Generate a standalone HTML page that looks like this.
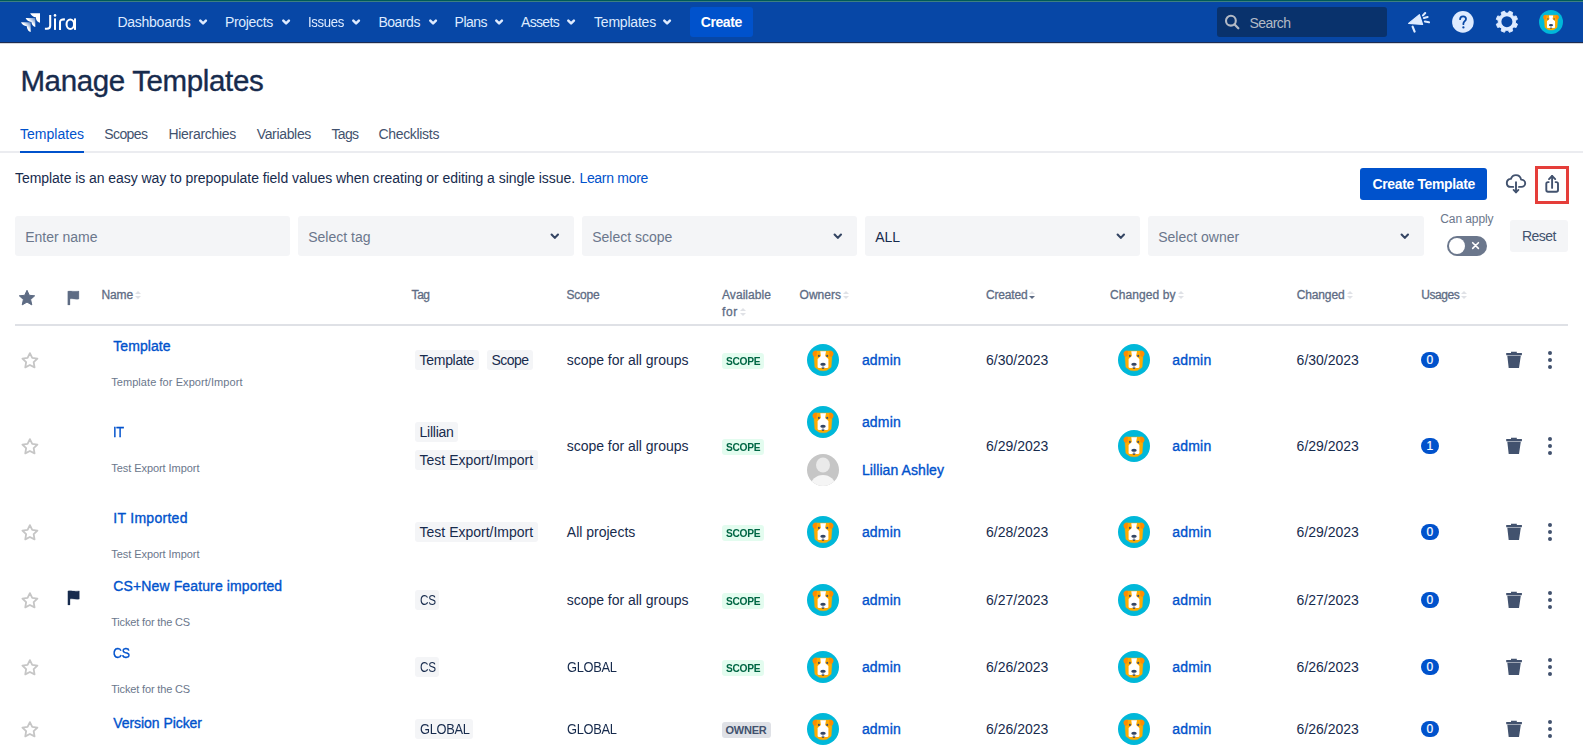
<!DOCTYPE html>
<html><head><meta charset="utf-8"><title>Manage Templates</title>
<style>
html,body{margin:0;padding:0;background:#FFFFFF;}
body{width:1583px;height:754px;position:relative;overflow:hidden;font-family:"Liberation Sans",sans-serif;}
</style></head><body>
<div style="position:absolute;left:0px;top:0px;width:1583px;height:1px;background:#005A5A;border-radius:0px;"></div>
<div style="position:absolute;left:0px;top:1px;width:1583px;height:1px;background:#3E8080;border-radius:0px;"></div>
<div style="position:absolute;left:0px;top:2px;width:1583px;height:40px;background:#0747A6;border-radius:0px;"></div>
<div style="position:absolute;left:0px;top:42px;width:1583px;height:1px;background:#1E2C50;border-radius:0px;"></div>
<div style="position:absolute;left:0px;top:43px;width:1583px;height:1px;background:#D5D7DC;border-radius:0px;"></div>
<svg style="position:absolute;left:0px;top:0px;overflow:visible" width="90" height="44" viewBox="0 0 90 44">
<defs>
<linearGradient id="jg" x1="0.95" y1="0.05" x2="0.55" y2="0.45"><stop offset="0" stop-color="#FFFFFF" stop-opacity="0.35"/><stop offset="1" stop-color="#FFFFFF"/></linearGradient>
</defs>
<path fill="#FFFFFF" d="M30.1 13.2H40V22.7C38.4 22.3 36.3 20.9 36.1 19L35.9 17.2C33.4 17 31.2 15.6 30.1 13.2Z"/>
<path fill="url(#jg)" d="M25.6 18H35.3V27C33.6 26.6 31.7 25 31.4 21.9C28.7 21.8 26.5 20.3 25.6 18Z"/>
<path fill="url(#jg)" d="M21 22.3H30.7V32C29 31.5 27.1 30 26.8 26.2C24.1 26 21.9 24.6 21 22.3Z"/>
<g fill="none" stroke="#FFFFFF" stroke-width="2.05">
<path d="M50.2 14.9V25.8C50.2 28.1 49 28.7 47 28.7H44.9"/>
<path d="M55 18.4V29.9"/>
<path d="M60 29.9V22.3C60 20 61.8 19.3 64.9 19.4"/>
<ellipse cx="70.3" cy="24.15" rx="3.75" ry="4.75"/>
<path d="M75 18.4V29.9"/>
</g>
<circle cx="55" cy="15.4" r="1.3" fill="#FFFFFF"/>
</svg>
<svg style="position:absolute;left:199px;top:18px;overflow:visible" width="10" height="8" viewBox="0 0 10 8"><path d="M1.3 2.6L4.1 5.4L6.9 2.6" fill="none" stroke="#DEEBFF" stroke-width="2.5" stroke-linecap="round" stroke-linejoin="round"/></svg>
<svg style="position:absolute;left:282px;top:18px;overflow:visible" width="10" height="8" viewBox="0 0 10 8"><path d="M1.3 2.6L4.1 5.4L6.9 2.6" fill="none" stroke="#DEEBFF" stroke-width="2.5" stroke-linecap="round" stroke-linejoin="round"/></svg>
<svg style="position:absolute;left:352px;top:18px;overflow:visible" width="10" height="8" viewBox="0 0 10 8"><path d="M1.3 2.6L4.1 5.4L6.9 2.6" fill="none" stroke="#DEEBFF" stroke-width="2.5" stroke-linecap="round" stroke-linejoin="round"/></svg>
<svg style="position:absolute;left:429px;top:18px;overflow:visible" width="10" height="8" viewBox="0 0 10 8"><path d="M1.3 2.6L4.1 5.4L6.9 2.6" fill="none" stroke="#DEEBFF" stroke-width="2.5" stroke-linecap="round" stroke-linejoin="round"/></svg>
<svg style="position:absolute;left:495px;top:18px;overflow:visible" width="10" height="8" viewBox="0 0 10 8"><path d="M1.3 2.6L4.1 5.4L6.9 2.6" fill="none" stroke="#DEEBFF" stroke-width="2.5" stroke-linecap="round" stroke-linejoin="round"/></svg>
<svg style="position:absolute;left:567px;top:18px;overflow:visible" width="10" height="8" viewBox="0 0 10 8"><path d="M1.3 2.6L4.1 5.4L6.9 2.6" fill="none" stroke="#DEEBFF" stroke-width="2.5" stroke-linecap="round" stroke-linejoin="round"/></svg>
<svg style="position:absolute;left:663px;top:18px;overflow:visible" width="10" height="8" viewBox="0 0 10 8"><path d="M1.3 2.6L4.1 5.4L6.9 2.6" fill="none" stroke="#DEEBFF" stroke-width="2.5" stroke-linecap="round" stroke-linejoin="round"/></svg>
<div style="position:absolute;left:690px;top:7px;width:63px;height:29.799999999999997px;background:#0052CC;border-radius:3px;"></div>
<div style="position:absolute;left:1217px;top:7px;width:170px;height:29.5px;background:#09326C;border-radius:3px;"></div>
<svg style="position:absolute;left:1222px;top:13px;overflow:visible" width="20" height="20" viewBox="0 0 20 20"><circle cx="8.9" cy="7.7" r="4.9" fill="none" stroke="#B3BAC5" stroke-width="2.1"/><path d="M12.4 11.3L16.3 15.2" stroke="#B3BAC5" stroke-width="2.3" stroke-linecap="round"/></svg>
<svg style="position:absolute;left:1404px;top:8px;overflow:visible" width="30" height="28" viewBox="0 0 30 28"><g fill="#DEEBFF" stroke="#DEEBFF" stroke-linejoin="round">
<path d="M4.6 15.4L15.4 6.7L18.6 16.5Z" stroke-width="1.2"/>
<path d="M8.6 18.7L10.6 23.6" stroke-width="2.2" stroke-linecap="round"/>
<path d="M21.2 5.0L19.0 7.4" stroke-width="2.1" stroke-linecap="round"/>
<path d="M19.9 10.0L23.6 9.1" stroke-width="2.1" stroke-linecap="round"/>
<path d="M20.9 13.5L25.0 14.3" stroke-width="2.1" stroke-linecap="round"/>
</g></svg>
<svg style="position:absolute;left:1452px;top:11px;overflow:visible" width="22" height="22" viewBox="0 0 22 22"><circle cx="10.9" cy="10.9" r="10.8" fill="#DEEBFF"/>
<path d="M8.1 8.2C8.1 6.5 9.4 5.3 11.1 5.3C12.8 5.3 14 6.4 14 8C14 10 11.4 10.4 11.4 12.6V13.2" fill="none" stroke="#0747A6" stroke-width="1.8" stroke-linecap="round"/>
<circle cx="11.4" cy="16.4" r="1.15" fill="#0747A6"/></svg>
<svg style="position:absolute;left:1490px;top:6px;overflow:visible" width="34" height="32" viewBox="0 0 34 32"><polygon points="18.11,7.08 19.35,5.08 22.68,6.46 22.14,8.75 23.85,10.46 26.14,9.92 27.52,13.25 25.52,14.49 25.52,16.91 27.52,18.15 26.14,21.48 23.85,20.94 22.14,22.65 22.68,24.94 19.35,26.32 18.11,24.32 15.69,24.32 14.45,26.32 11.12,24.94 11.66,22.65 9.95,20.94 7.66,21.48 6.28,18.15 8.28,16.91 8.28,14.49 6.28,13.25 7.66,9.92 9.95,10.46 11.66,8.75 11.12,6.46 14.45,5.08 15.69,7.08" fill="#DEEBFF" stroke="#DEEBFF" stroke-width="0.9" stroke-linejoin="round"/><circle cx="16.9" cy="15.7" r="5.5" fill="#0747A6"/></svg>
<svg style="position:absolute;left:1539px;top:10px;overflow:visible" width="24" height="24" viewBox="0 0 32 32"><circle cx="16" cy="16" r="16" fill="#00B8D9"/>
<path d="M7.6 6.9H24.4L24.9 14L24.1 23.3L19.8 26.3C18 26.9 14 26.9 12.2 26.3L7.9 23.3L7.1 14Z" fill="#FFAB00" stroke="#FFAB00" stroke-width="0.4" stroke-linejoin="round"/>
<path d="M9.9 6.9C7.6 6.3 5.5 7.4 5.5 9.7C5.5 11.2 6.4 12.4 7.7 12.8L9.5 12.3Z" fill="#FF8B00"/>
<path d="M22.1 6.9C24.4 6.3 26.5 7.4 26.5 9.7C26.5 11.2 25.6 12.4 24.3 12.8L22.5 12.3Z" fill="#FF8B00"/>
<path d="M13.3 7.3H19L18.1 11.9L21.4 15V23.3L20.3 24.1H11.7L10.6 23.3V15L13.9 11.9Z" fill="#FFFFFF"/>
<circle cx="11.9" cy="11.9" r="1.05" fill="#42526E"/>
<circle cx="20.2" cy="11.9" r="1.05" fill="#42526E"/>
<ellipse cx="16" cy="20.2" rx="2.75" ry="1.55" fill="#344563"/>
<path d="M16 21.5V23.6" stroke="#42526E" stroke-width="0.7"/>
<path d="M14.4 23.6H17.6C17.3 24.5 16.7 24.9 16 24.9C15.3 24.9 14.7 24.5 14.4 23.6Z" fill="#344563"/>
</svg>
<div style="position:absolute;left:0px;top:151px;width:1583px;height:2px;background:#EBECF0;border-radius:0px;"></div>
<div style="position:absolute;left:20px;top:151px;width:64px;height:2px;background:#0052CC;border-radius:0px;"></div>
<div style="position:absolute;left:1360px;top:168px;width:127px;height:32px;background:#0052CC;border-radius:3px;"></div>
<svg style="position:absolute;left:1500px;top:165px;overflow:visible" width="32" height="32" viewBox="0 0 32 32"><g fill="none" stroke="#42526E" stroke-width="1.9" stroke-linecap="round" stroke-linejoin="round">
<path d="M13.2 21.9H10.9C8.1 21.9 6.8 20 6.8 17.9C6.8 15.6 8.6 13.8 10.9 13.9C11.8 11.4 13.8 10.1 15.9 10.1C18.5 10.1 20.6 12 21.1 14.6C23.3 14.6 25.2 16.2 25.2 18.3C25.2 20.4 23.5 21.9 21.4 21.9H19"/>
<path d="M16 17.3V27.3"/>
<path d="M13.6 24.9L16 27.3L18.4 24.9"/>
</g></svg>
<div style="position:absolute;left:1535px;top:166px;width:28px;height:32px;border:3px solid #E53E3A;"></div>
<svg style="position:absolute;left:1535px;top:165px;overflow:visible" width="34" height="40" viewBox="0 0 34 40"><g fill="none" stroke="#42526E" stroke-width="1.9" stroke-linecap="round" stroke-linejoin="round">
<path d="M13.7 17.1H13C11.9 17.1 11.3 17.7 11.3 18.8V25C11.3 26.1 11.9 26.7 13 26.7H21.3C22.4 26.7 23 26.1 23 25V18.8C23 17.7 22.4 17.1 21.3 17.1H20.6"/>
<path d="M17.1 22.9V11"/>
<path d="M14 14.1L17.1 11L20.2 14.1"/>
</g></svg>
<div style="position:absolute;left:15px;top:216px;width:275px;height:39.5px;background:#F4F5F7;border-radius:3px;"></div>
<div style="position:absolute;left:298px;top:216px;width:276px;height:39.5px;background:#F4F5F7;border-radius:3px;"></div>
<svg style="position:absolute;left:550px;top:232px;overflow:visible" width="10" height="10" viewBox="0 0 10 10"><path d="M1.6 2.5L4.8 5.9L8 2.5" fill="none" stroke="#344563" stroke-width="2.1" stroke-linecap="round" stroke-linejoin="round"/></svg>
<div style="position:absolute;left:582px;top:216px;width:275px;height:39.5px;background:#F4F5F7;border-radius:3px;"></div>
<svg style="position:absolute;left:833px;top:232px;overflow:visible" width="10" height="10" viewBox="0 0 10 10"><path d="M1.6 2.5L4.8 5.9L8 2.5" fill="none" stroke="#344563" stroke-width="2.1" stroke-linecap="round" stroke-linejoin="round"/></svg>
<div style="position:absolute;left:865px;top:216px;width:275px;height:39.5px;background:#F4F5F7;border-radius:3px;"></div>
<svg style="position:absolute;left:1116px;top:232px;overflow:visible" width="10" height="10" viewBox="0 0 10 10"><path d="M1.6 2.5L4.8 5.9L8 2.5" fill="none" stroke="#344563" stroke-width="2.1" stroke-linecap="round" stroke-linejoin="round"/></svg>
<div style="position:absolute;left:1148px;top:216px;width:276px;height:39.5px;background:#F4F5F7;border-radius:3px;"></div>
<svg style="position:absolute;left:1400px;top:232px;overflow:visible" width="10" height="10" viewBox="0 0 10 10"><path d="M1.6 2.5L4.8 5.9L8 2.5" fill="none" stroke="#344563" stroke-width="2.1" stroke-linecap="round" stroke-linejoin="round"/></svg>
<div style="position:absolute;left:1447px;top:236px;width:40px;height:20px;background:#6B778C;border-radius:10px;"></div>
<div style="position:absolute;left:1449px;top:238px;width:16px;height:16px;border-radius:8px;background:#FFFFFF"></div>
<svg style="position:absolute;left:1470px;top:240px;overflow:visible" width="12" height="12" viewBox="0 0 12 12"><path d="M2.7 2.7L8.4 8.4M8.4 2.7L2.7 8.4" stroke="#FFFFFF" stroke-width="1.6" stroke-linecap="round"/></svg>
<div style="position:absolute;left:1510px;top:220px;width:58px;height:32px;background:#F4F5F7;border-radius:3px;"></div>
<svg style="position:absolute;left:17px;top:288px;overflow:visible" width="20" height="20" viewBox="0 0 20 20"><path d="M10 2.3L12.3 7.3L17.7 7.8L13.6 11.5L14.8 16.9L10 14.1L5.2 16.9L6.4 11.5L2.3 7.8L7.7 7.3Z" fill="#5E6C84" stroke="#5E6C84" stroke-width="1" stroke-linejoin="round"/></svg>
<svg style="position:absolute;left:65px;top:288px;overflow:visible" width="18" height="20" viewBox="0 0 18 20"><path d="M2.8 3.3C5.5 2.4 8.5 3.9 13.9 3.1V11C10.5 11.9 7.8 10.2 5 10.9V16.9H2.8Z" fill="#5E6C84" stroke="#5E6C84" stroke-width="0.3" stroke-linejoin="round"/></svg>
<svg style="position:absolute;left:135.0px;top:289px;overflow:visible" width="6" height="12" viewBox="0 0 6 12"><path d="M0 5L3 2L6 5Z" fill="#DFE1E6"/><path d="M0 7L3 10L6 7Z" fill="#DFE1E6"/></svg>
<svg style="position:absolute;left:842.9px;top:289px;overflow:visible" width="6" height="12" viewBox="0 0 6 12"><path d="M0 5L3 2L6 5Z" fill="#DFE1E6"/><path d="M0 7L3 10L6 7Z" fill="#DFE1E6"/></svg>
<svg style="position:absolute;left:1029.4px;top:289px;overflow:visible" width="6" height="12" viewBox="0 0 6 12"><path d="M0 5L3 2L6 5Z" fill="#DFE1E6"/><path d="M0 7L3 10L6 7Z" fill="#5E6C84"/></svg>
<svg style="position:absolute;left:1177.6px;top:289px;overflow:visible" width="6" height="12" viewBox="0 0 6 12"><path d="M0 5L3 2L6 5Z" fill="#DFE1E6"/><path d="M0 7L3 10L6 7Z" fill="#DFE1E6"/></svg>
<svg style="position:absolute;left:1346.5px;top:289px;overflow:visible" width="6" height="12" viewBox="0 0 6 12"><path d="M0 5L3 2L6 5Z" fill="#DFE1E6"/><path d="M0 7L3 10L6 7Z" fill="#DFE1E6"/></svg>
<svg style="position:absolute;left:1461.2px;top:289px;overflow:visible" width="6" height="12" viewBox="0 0 6 12"><path d="M0 5L3 2L6 5Z" fill="#DFE1E6"/><path d="M0 7L3 10L6 7Z" fill="#DFE1E6"/></svg>
<svg style="position:absolute;left:740px;top:306px;overflow:visible" width="6" height="12" viewBox="0 0 6 12"><path d="M0 5L3 2L6 5Z" fill="#DFE1E6"/><path d="M0 7L3 10L6 7Z" fill="#DFE1E6"/></svg>
<div style="position:absolute;left:15px;top:324px;width:1553px;height:2px;background:#DFE1E6;border-radius:0px;"></div>
<svg style="position:absolute;left:20px;top:350px;overflow:visible" width="20" height="20" viewBox="0 0 20 20"><path d="M9.90 3.10L12.22 7.80L17.41 8.56L13.66 12.22L14.54 17.39L9.90 14.95L5.26 17.39L6.14 12.22L2.39 8.56L7.58 7.80Z" fill="none" stroke="#C6C6C6" stroke-width="1.8" stroke-linejoin="round"/></svg>
<div style="position:absolute;left:415.2px;top:350.0px;width:63.39999999999998px;height:20.0px;background:#F4F5F7;border-radius:3px;"></div>
<div style="position:absolute;left:487.2px;top:350.0px;width:45.50000000000006px;height:20.0px;background:#F4F5F7;border-radius:3px;"></div>
<div style="position:absolute;left:722px;top:353px;width:42px;height:16px;background:#E3FCEF;border-radius:3px;"></div>
<svg style="position:absolute;left:807px;top:344.0px;overflow:visible" width="32" height="32" viewBox="0 0 32 32"><circle cx="16" cy="16" r="16" fill="#00B8D9"/>
<path d="M7.6 6.9H24.4L24.9 14L24.1 23.3L19.8 26.3C18 26.9 14 26.9 12.2 26.3L7.9 23.3L7.1 14Z" fill="#FFAB00" stroke="#FFAB00" stroke-width="0.4" stroke-linejoin="round"/>
<path d="M9.9 6.9C7.6 6.3 5.5 7.4 5.5 9.7C5.5 11.2 6.4 12.4 7.7 12.8L9.5 12.3Z" fill="#FF8B00"/>
<path d="M22.1 6.9C24.4 6.3 26.5 7.4 26.5 9.7C26.5 11.2 25.6 12.4 24.3 12.8L22.5 12.3Z" fill="#FF8B00"/>
<path d="M13.3 7.3H19L18.1 11.9L21.4 15V23.3L20.3 24.1H11.7L10.6 23.3V15L13.9 11.9Z" fill="#FFFFFF"/>
<circle cx="11.9" cy="11.9" r="1.05" fill="#42526E"/>
<circle cx="20.2" cy="11.9" r="1.05" fill="#42526E"/>
<ellipse cx="16" cy="20.2" rx="2.75" ry="1.55" fill="#344563"/>
<path d="M16 21.5V23.6" stroke="#42526E" stroke-width="0.7"/>
<path d="M14.4 23.6H17.6C17.3 24.5 16.7 24.9 16 24.9C15.3 24.9 14.7 24.5 14.4 23.6Z" fill="#344563"/>
</svg>
<svg style="position:absolute;left:1118px;top:344px;overflow:visible" width="32" height="32" viewBox="0 0 32 32"><circle cx="16" cy="16" r="16" fill="#00B8D9"/>
<path d="M7.6 6.9H24.4L24.9 14L24.1 23.3L19.8 26.3C18 26.9 14 26.9 12.2 26.3L7.9 23.3L7.1 14Z" fill="#FFAB00" stroke="#FFAB00" stroke-width="0.4" stroke-linejoin="round"/>
<path d="M9.9 6.9C7.6 6.3 5.5 7.4 5.5 9.7C5.5 11.2 6.4 12.4 7.7 12.8L9.5 12.3Z" fill="#FF8B00"/>
<path d="M22.1 6.9C24.4 6.3 26.5 7.4 26.5 9.7C26.5 11.2 25.6 12.4 24.3 12.8L22.5 12.3Z" fill="#FF8B00"/>
<path d="M13.3 7.3H19L18.1 11.9L21.4 15V23.3L20.3 24.1H11.7L10.6 23.3V15L13.9 11.9Z" fill="#FFFFFF"/>
<circle cx="11.9" cy="11.9" r="1.05" fill="#42526E"/>
<circle cx="20.2" cy="11.9" r="1.05" fill="#42526E"/>
<ellipse cx="16" cy="20.2" rx="2.75" ry="1.55" fill="#344563"/>
<path d="M16 21.5V23.6" stroke="#42526E" stroke-width="0.7"/>
<path d="M14.4 23.6H17.6C17.3 24.5 16.7 24.9 16 24.9C15.3 24.9 14.7 24.5 14.4 23.6Z" fill="#344563"/>
</svg>
<div style="position:absolute;left:1421px;top:352px;width:18px;height:16px;background:#0052CC;border-radius:8px;"></div>
<svg style="position:absolute;left:1506px;top:352px;overflow:visible" width="16" height="16" viewBox="0 0 16 16"><path d="M0.2 0.9H15.9V3.2H0.2Z M5 -0.2H10.8V1H5Z M1.3 3.8H14.8L13 16H2.7Z" fill="#42526E"/></svg>
<div style="position:absolute;left:1548px;top:351px;width:4px;height:4px;border-radius:2px;background:#42526E"></div>
<div style="position:absolute;left:1548px;top:358px;width:4px;height:4px;border-radius:2px;background:#42526E"></div>
<div style="position:absolute;left:1548px;top:365px;width:4px;height:4px;border-radius:2px;background:#42526E"></div>
<svg style="position:absolute;left:20px;top:436px;overflow:visible" width="20" height="20" viewBox="0 0 20 20"><path d="M9.90 3.10L12.22 7.80L17.41 8.56L13.66 12.22L14.54 17.39L9.90 14.95L5.26 17.39L6.14 12.22L2.39 8.56L7.58 7.80Z" fill="none" stroke="#C6C6C6" stroke-width="1.8" stroke-linejoin="round"/></svg>
<div style="position:absolute;left:415.2px;top:422.0px;width:42.60000000000002px;height:20.0px;background:#F4F5F7;border-radius:3px;"></div>
<div style="position:absolute;left:415.2px;top:450.0px;width:122.59999999999997px;height:20.0px;background:#F4F5F7;border-radius:3px;"></div>
<div style="position:absolute;left:722px;top:439px;width:42px;height:16px;background:#E3FCEF;border-radius:3px;"></div>
<svg style="position:absolute;left:807px;top:406.0px;overflow:visible" width="32" height="32" viewBox="0 0 32 32"><circle cx="16" cy="16" r="16" fill="#00B8D9"/>
<path d="M7.6 6.9H24.4L24.9 14L24.1 23.3L19.8 26.3C18 26.9 14 26.9 12.2 26.3L7.9 23.3L7.1 14Z" fill="#FFAB00" stroke="#FFAB00" stroke-width="0.4" stroke-linejoin="round"/>
<path d="M9.9 6.9C7.6 6.3 5.5 7.4 5.5 9.7C5.5 11.2 6.4 12.4 7.7 12.8L9.5 12.3Z" fill="#FF8B00"/>
<path d="M22.1 6.9C24.4 6.3 26.5 7.4 26.5 9.7C26.5 11.2 25.6 12.4 24.3 12.8L22.5 12.3Z" fill="#FF8B00"/>
<path d="M13.3 7.3H19L18.1 11.9L21.4 15V23.3L20.3 24.1H11.7L10.6 23.3V15L13.9 11.9Z" fill="#FFFFFF"/>
<circle cx="11.9" cy="11.9" r="1.05" fill="#42526E"/>
<circle cx="20.2" cy="11.9" r="1.05" fill="#42526E"/>
<ellipse cx="16" cy="20.2" rx="2.75" ry="1.55" fill="#344563"/>
<path d="M16 21.5V23.6" stroke="#42526E" stroke-width="0.7"/>
<path d="M14.4 23.6H17.6C17.3 24.5 16.7 24.9 16 24.9C15.3 24.9 14.7 24.5 14.4 23.6Z" fill="#344563"/>
</svg>
<svg style="position:absolute;left:807px;top:454.0px;overflow:visible" width="32" height="32" viewBox="0 0 32 32"><defs><clipPath id="gc"><circle cx="16" cy="16" r="16"/></clipPath></defs><circle cx="16" cy="16" r="16" fill="#C6C6C6"/>
<filter id="gb"><feGaussianBlur stdDeviation="0.5"/></filter><g clip-path="url(#gc)"><g filter="url(#gb)"><ellipse cx="16" cy="11" rx="7" ry="7.6" fill="#EAEAEA"/><ellipse cx="16" cy="32.5" rx="12.5" ry="11.5" fill="#F5F5F5"/></g></g></svg>
<svg style="position:absolute;left:1118px;top:430px;overflow:visible" width="32" height="32" viewBox="0 0 32 32"><circle cx="16" cy="16" r="16" fill="#00B8D9"/>
<path d="M7.6 6.9H24.4L24.9 14L24.1 23.3L19.8 26.3C18 26.9 14 26.9 12.2 26.3L7.9 23.3L7.1 14Z" fill="#FFAB00" stroke="#FFAB00" stroke-width="0.4" stroke-linejoin="round"/>
<path d="M9.9 6.9C7.6 6.3 5.5 7.4 5.5 9.7C5.5 11.2 6.4 12.4 7.7 12.8L9.5 12.3Z" fill="#FF8B00"/>
<path d="M22.1 6.9C24.4 6.3 26.5 7.4 26.5 9.7C26.5 11.2 25.6 12.4 24.3 12.8L22.5 12.3Z" fill="#FF8B00"/>
<path d="M13.3 7.3H19L18.1 11.9L21.4 15V23.3L20.3 24.1H11.7L10.6 23.3V15L13.9 11.9Z" fill="#FFFFFF"/>
<circle cx="11.9" cy="11.9" r="1.05" fill="#42526E"/>
<circle cx="20.2" cy="11.9" r="1.05" fill="#42526E"/>
<ellipse cx="16" cy="20.2" rx="2.75" ry="1.55" fill="#344563"/>
<path d="M16 21.5V23.6" stroke="#42526E" stroke-width="0.7"/>
<path d="M14.4 23.6H17.6C17.3 24.5 16.7 24.9 16 24.9C15.3 24.9 14.7 24.5 14.4 23.6Z" fill="#344563"/>
</svg>
<div style="position:absolute;left:1421px;top:438px;width:18px;height:16px;background:#0052CC;border-radius:8px;"></div>
<svg style="position:absolute;left:1506px;top:438px;overflow:visible" width="16" height="16" viewBox="0 0 16 16"><path d="M0.2 0.9H15.9V3.2H0.2Z M5 -0.2H10.8V1H5Z M1.3 3.8H14.8L13 16H2.7Z" fill="#42526E"/></svg>
<div style="position:absolute;left:1548px;top:437px;width:4px;height:4px;border-radius:2px;background:#42526E"></div>
<div style="position:absolute;left:1548px;top:444px;width:4px;height:4px;border-radius:2px;background:#42526E"></div>
<div style="position:absolute;left:1548px;top:451px;width:4px;height:4px;border-radius:2px;background:#42526E"></div>
<svg style="position:absolute;left:20px;top:522px;overflow:visible" width="20" height="20" viewBox="0 0 20 20"><path d="M9.90 3.10L12.22 7.80L17.41 8.56L13.66 12.22L14.54 17.39L9.90 14.95L5.26 17.39L6.14 12.22L2.39 8.56L7.58 7.80Z" fill="none" stroke="#C6C6C6" stroke-width="1.8" stroke-linejoin="round"/></svg>
<div style="position:absolute;left:415.2px;top:522.0px;width:122.59999999999997px;height:20.0px;background:#F4F5F7;border-radius:3px;"></div>
<div style="position:absolute;left:722px;top:525px;width:42px;height:16px;background:#E3FCEF;border-radius:3px;"></div>
<svg style="position:absolute;left:807px;top:516.0px;overflow:visible" width="32" height="32" viewBox="0 0 32 32"><circle cx="16" cy="16" r="16" fill="#00B8D9"/>
<path d="M7.6 6.9H24.4L24.9 14L24.1 23.3L19.8 26.3C18 26.9 14 26.9 12.2 26.3L7.9 23.3L7.1 14Z" fill="#FFAB00" stroke="#FFAB00" stroke-width="0.4" stroke-linejoin="round"/>
<path d="M9.9 6.9C7.6 6.3 5.5 7.4 5.5 9.7C5.5 11.2 6.4 12.4 7.7 12.8L9.5 12.3Z" fill="#FF8B00"/>
<path d="M22.1 6.9C24.4 6.3 26.5 7.4 26.5 9.7C26.5 11.2 25.6 12.4 24.3 12.8L22.5 12.3Z" fill="#FF8B00"/>
<path d="M13.3 7.3H19L18.1 11.9L21.4 15V23.3L20.3 24.1H11.7L10.6 23.3V15L13.9 11.9Z" fill="#FFFFFF"/>
<circle cx="11.9" cy="11.9" r="1.05" fill="#42526E"/>
<circle cx="20.2" cy="11.9" r="1.05" fill="#42526E"/>
<ellipse cx="16" cy="20.2" rx="2.75" ry="1.55" fill="#344563"/>
<path d="M16 21.5V23.6" stroke="#42526E" stroke-width="0.7"/>
<path d="M14.4 23.6H17.6C17.3 24.5 16.7 24.9 16 24.9C15.3 24.9 14.7 24.5 14.4 23.6Z" fill="#344563"/>
</svg>
<svg style="position:absolute;left:1118px;top:516px;overflow:visible" width="32" height="32" viewBox="0 0 32 32"><circle cx="16" cy="16" r="16" fill="#00B8D9"/>
<path d="M7.6 6.9H24.4L24.9 14L24.1 23.3L19.8 26.3C18 26.9 14 26.9 12.2 26.3L7.9 23.3L7.1 14Z" fill="#FFAB00" stroke="#FFAB00" stroke-width="0.4" stroke-linejoin="round"/>
<path d="M9.9 6.9C7.6 6.3 5.5 7.4 5.5 9.7C5.5 11.2 6.4 12.4 7.7 12.8L9.5 12.3Z" fill="#FF8B00"/>
<path d="M22.1 6.9C24.4 6.3 26.5 7.4 26.5 9.7C26.5 11.2 25.6 12.4 24.3 12.8L22.5 12.3Z" fill="#FF8B00"/>
<path d="M13.3 7.3H19L18.1 11.9L21.4 15V23.3L20.3 24.1H11.7L10.6 23.3V15L13.9 11.9Z" fill="#FFFFFF"/>
<circle cx="11.9" cy="11.9" r="1.05" fill="#42526E"/>
<circle cx="20.2" cy="11.9" r="1.05" fill="#42526E"/>
<ellipse cx="16" cy="20.2" rx="2.75" ry="1.55" fill="#344563"/>
<path d="M16 21.5V23.6" stroke="#42526E" stroke-width="0.7"/>
<path d="M14.4 23.6H17.6C17.3 24.5 16.7 24.9 16 24.9C15.3 24.9 14.7 24.5 14.4 23.6Z" fill="#344563"/>
</svg>
<div style="position:absolute;left:1421px;top:524px;width:18px;height:16px;background:#0052CC;border-radius:8px;"></div>
<svg style="position:absolute;left:1506px;top:524px;overflow:visible" width="16" height="16" viewBox="0 0 16 16"><path d="M0.2 0.9H15.9V3.2H0.2Z M5 -0.2H10.8V1H5Z M1.3 3.8H14.8L13 16H2.7Z" fill="#42526E"/></svg>
<div style="position:absolute;left:1548px;top:523px;width:4px;height:4px;border-radius:2px;background:#42526E"></div>
<div style="position:absolute;left:1548px;top:530px;width:4px;height:4px;border-radius:2px;background:#42526E"></div>
<div style="position:absolute;left:1548px;top:537px;width:4px;height:4px;border-radius:2px;background:#42526E"></div>
<svg style="position:absolute;left:20px;top:590px;overflow:visible" width="20" height="20" viewBox="0 0 20 20"><path d="M9.90 3.10L12.22 7.80L17.41 8.56L13.66 12.22L14.54 17.39L9.90 14.95L5.26 17.39L6.14 12.22L2.39 8.56L7.58 7.80Z" fill="none" stroke="#C6C6C6" stroke-width="1.8" stroke-linejoin="round"/></svg>
<svg style="position:absolute;left:65px;top:590px;overflow:visible" width="18" height="20" viewBox="0 0 18 20"><path d="M2.9 1.1C5.7 0.3 8.8 1.7 14.3 0.9V9.1C10.8 9.9 8 8.3 5 9V14.9H2.9Z" fill="#172B4D" stroke="#172B4D" stroke-width="0.3" stroke-linejoin="round"/></svg>
<div style="position:absolute;left:415.2px;top:590.0px;width:23.5px;height:20.0px;background:#F4F5F7;border-radius:3px;"></div>
<div style="position:absolute;left:722px;top:593px;width:42px;height:16px;background:#E3FCEF;border-radius:3px;"></div>
<svg style="position:absolute;left:807px;top:584.0px;overflow:visible" width="32" height="32" viewBox="0 0 32 32"><circle cx="16" cy="16" r="16" fill="#00B8D9"/>
<path d="M7.6 6.9H24.4L24.9 14L24.1 23.3L19.8 26.3C18 26.9 14 26.9 12.2 26.3L7.9 23.3L7.1 14Z" fill="#FFAB00" stroke="#FFAB00" stroke-width="0.4" stroke-linejoin="round"/>
<path d="M9.9 6.9C7.6 6.3 5.5 7.4 5.5 9.7C5.5 11.2 6.4 12.4 7.7 12.8L9.5 12.3Z" fill="#FF8B00"/>
<path d="M22.1 6.9C24.4 6.3 26.5 7.4 26.5 9.7C26.5 11.2 25.6 12.4 24.3 12.8L22.5 12.3Z" fill="#FF8B00"/>
<path d="M13.3 7.3H19L18.1 11.9L21.4 15V23.3L20.3 24.1H11.7L10.6 23.3V15L13.9 11.9Z" fill="#FFFFFF"/>
<circle cx="11.9" cy="11.9" r="1.05" fill="#42526E"/>
<circle cx="20.2" cy="11.9" r="1.05" fill="#42526E"/>
<ellipse cx="16" cy="20.2" rx="2.75" ry="1.55" fill="#344563"/>
<path d="M16 21.5V23.6" stroke="#42526E" stroke-width="0.7"/>
<path d="M14.4 23.6H17.6C17.3 24.5 16.7 24.9 16 24.9C15.3 24.9 14.7 24.5 14.4 23.6Z" fill="#344563"/>
</svg>
<svg style="position:absolute;left:1118px;top:584px;overflow:visible" width="32" height="32" viewBox="0 0 32 32"><circle cx="16" cy="16" r="16" fill="#00B8D9"/>
<path d="M7.6 6.9H24.4L24.9 14L24.1 23.3L19.8 26.3C18 26.9 14 26.9 12.2 26.3L7.9 23.3L7.1 14Z" fill="#FFAB00" stroke="#FFAB00" stroke-width="0.4" stroke-linejoin="round"/>
<path d="M9.9 6.9C7.6 6.3 5.5 7.4 5.5 9.7C5.5 11.2 6.4 12.4 7.7 12.8L9.5 12.3Z" fill="#FF8B00"/>
<path d="M22.1 6.9C24.4 6.3 26.5 7.4 26.5 9.7C26.5 11.2 25.6 12.4 24.3 12.8L22.5 12.3Z" fill="#FF8B00"/>
<path d="M13.3 7.3H19L18.1 11.9L21.4 15V23.3L20.3 24.1H11.7L10.6 23.3V15L13.9 11.9Z" fill="#FFFFFF"/>
<circle cx="11.9" cy="11.9" r="1.05" fill="#42526E"/>
<circle cx="20.2" cy="11.9" r="1.05" fill="#42526E"/>
<ellipse cx="16" cy="20.2" rx="2.75" ry="1.55" fill="#344563"/>
<path d="M16 21.5V23.6" stroke="#42526E" stroke-width="0.7"/>
<path d="M14.4 23.6H17.6C17.3 24.5 16.7 24.9 16 24.9C15.3 24.9 14.7 24.5 14.4 23.6Z" fill="#344563"/>
</svg>
<div style="position:absolute;left:1421px;top:592px;width:18px;height:16px;background:#0052CC;border-radius:8px;"></div>
<svg style="position:absolute;left:1506px;top:592px;overflow:visible" width="16" height="16" viewBox="0 0 16 16"><path d="M0.2 0.9H15.9V3.2H0.2Z M5 -0.2H10.8V1H5Z M1.3 3.8H14.8L13 16H2.7Z" fill="#42526E"/></svg>
<div style="position:absolute;left:1548px;top:591px;width:4px;height:4px;border-radius:2px;background:#42526E"></div>
<div style="position:absolute;left:1548px;top:598px;width:4px;height:4px;border-radius:2px;background:#42526E"></div>
<div style="position:absolute;left:1548px;top:605px;width:4px;height:4px;border-radius:2px;background:#42526E"></div>
<svg style="position:absolute;left:20px;top:657px;overflow:visible" width="20" height="20" viewBox="0 0 20 20"><path d="M9.90 3.10L12.22 7.80L17.41 8.56L13.66 12.22L14.54 17.39L9.90 14.95L5.26 17.39L6.14 12.22L2.39 8.56L7.58 7.80Z" fill="none" stroke="#C6C6C6" stroke-width="1.8" stroke-linejoin="round"/></svg>
<div style="position:absolute;left:415.2px;top:657.0px;width:23.5px;height:20.0px;background:#F4F5F7;border-radius:3px;"></div>
<div style="position:absolute;left:722px;top:660px;width:42px;height:16px;background:#E3FCEF;border-radius:3px;"></div>
<svg style="position:absolute;left:807px;top:651.0px;overflow:visible" width="32" height="32" viewBox="0 0 32 32"><circle cx="16" cy="16" r="16" fill="#00B8D9"/>
<path d="M7.6 6.9H24.4L24.9 14L24.1 23.3L19.8 26.3C18 26.9 14 26.9 12.2 26.3L7.9 23.3L7.1 14Z" fill="#FFAB00" stroke="#FFAB00" stroke-width="0.4" stroke-linejoin="round"/>
<path d="M9.9 6.9C7.6 6.3 5.5 7.4 5.5 9.7C5.5 11.2 6.4 12.4 7.7 12.8L9.5 12.3Z" fill="#FF8B00"/>
<path d="M22.1 6.9C24.4 6.3 26.5 7.4 26.5 9.7C26.5 11.2 25.6 12.4 24.3 12.8L22.5 12.3Z" fill="#FF8B00"/>
<path d="M13.3 7.3H19L18.1 11.9L21.4 15V23.3L20.3 24.1H11.7L10.6 23.3V15L13.9 11.9Z" fill="#FFFFFF"/>
<circle cx="11.9" cy="11.9" r="1.05" fill="#42526E"/>
<circle cx="20.2" cy="11.9" r="1.05" fill="#42526E"/>
<ellipse cx="16" cy="20.2" rx="2.75" ry="1.55" fill="#344563"/>
<path d="M16 21.5V23.6" stroke="#42526E" stroke-width="0.7"/>
<path d="M14.4 23.6H17.6C17.3 24.5 16.7 24.9 16 24.9C15.3 24.9 14.7 24.5 14.4 23.6Z" fill="#344563"/>
</svg>
<svg style="position:absolute;left:1118px;top:651px;overflow:visible" width="32" height="32" viewBox="0 0 32 32"><circle cx="16" cy="16" r="16" fill="#00B8D9"/>
<path d="M7.6 6.9H24.4L24.9 14L24.1 23.3L19.8 26.3C18 26.9 14 26.9 12.2 26.3L7.9 23.3L7.1 14Z" fill="#FFAB00" stroke="#FFAB00" stroke-width="0.4" stroke-linejoin="round"/>
<path d="M9.9 6.9C7.6 6.3 5.5 7.4 5.5 9.7C5.5 11.2 6.4 12.4 7.7 12.8L9.5 12.3Z" fill="#FF8B00"/>
<path d="M22.1 6.9C24.4 6.3 26.5 7.4 26.5 9.7C26.5 11.2 25.6 12.4 24.3 12.8L22.5 12.3Z" fill="#FF8B00"/>
<path d="M13.3 7.3H19L18.1 11.9L21.4 15V23.3L20.3 24.1H11.7L10.6 23.3V15L13.9 11.9Z" fill="#FFFFFF"/>
<circle cx="11.9" cy="11.9" r="1.05" fill="#42526E"/>
<circle cx="20.2" cy="11.9" r="1.05" fill="#42526E"/>
<ellipse cx="16" cy="20.2" rx="2.75" ry="1.55" fill="#344563"/>
<path d="M16 21.5V23.6" stroke="#42526E" stroke-width="0.7"/>
<path d="M14.4 23.6H17.6C17.3 24.5 16.7 24.9 16 24.9C15.3 24.9 14.7 24.5 14.4 23.6Z" fill="#344563"/>
</svg>
<div style="position:absolute;left:1421px;top:659px;width:18px;height:16px;background:#0052CC;border-radius:8px;"></div>
<svg style="position:absolute;left:1506px;top:659px;overflow:visible" width="16" height="16" viewBox="0 0 16 16"><path d="M0.2 0.9H15.9V3.2H0.2Z M5 -0.2H10.8V1H5Z M1.3 3.8H14.8L13 16H2.7Z" fill="#42526E"/></svg>
<div style="position:absolute;left:1548px;top:658px;width:4px;height:4px;border-radius:2px;background:#42526E"></div>
<div style="position:absolute;left:1548px;top:665px;width:4px;height:4px;border-radius:2px;background:#42526E"></div>
<div style="position:absolute;left:1548px;top:672px;width:4px;height:4px;border-radius:2px;background:#42526E"></div>
<svg style="position:absolute;left:20px;top:719px;overflow:visible" width="20" height="20" viewBox="0 0 20 20"><path d="M9.90 3.10L12.22 7.80L17.41 8.56L13.66 12.22L14.54 17.39L9.90 14.95L5.26 17.39L6.14 12.22L2.39 8.56L7.58 7.80Z" fill="none" stroke="#C6C6C6" stroke-width="1.8" stroke-linejoin="round"/></svg>
<div style="position:absolute;left:415.2px;top:719.0px;width:57.60000000000002px;height:20.0px;background:#F4F5F7;border-radius:3px;"></div>
<div style="position:absolute;left:722px;top:722px;width:48.5px;height:16px;background:#DFE1E6;border-radius:3px;"></div>
<svg style="position:absolute;left:807px;top:713.0px;overflow:visible" width="32" height="32" viewBox="0 0 32 32"><circle cx="16" cy="16" r="16" fill="#00B8D9"/>
<path d="M7.6 6.9H24.4L24.9 14L24.1 23.3L19.8 26.3C18 26.9 14 26.9 12.2 26.3L7.9 23.3L7.1 14Z" fill="#FFAB00" stroke="#FFAB00" stroke-width="0.4" stroke-linejoin="round"/>
<path d="M9.9 6.9C7.6 6.3 5.5 7.4 5.5 9.7C5.5 11.2 6.4 12.4 7.7 12.8L9.5 12.3Z" fill="#FF8B00"/>
<path d="M22.1 6.9C24.4 6.3 26.5 7.4 26.5 9.7C26.5 11.2 25.6 12.4 24.3 12.8L22.5 12.3Z" fill="#FF8B00"/>
<path d="M13.3 7.3H19L18.1 11.9L21.4 15V23.3L20.3 24.1H11.7L10.6 23.3V15L13.9 11.9Z" fill="#FFFFFF"/>
<circle cx="11.9" cy="11.9" r="1.05" fill="#42526E"/>
<circle cx="20.2" cy="11.9" r="1.05" fill="#42526E"/>
<ellipse cx="16" cy="20.2" rx="2.75" ry="1.55" fill="#344563"/>
<path d="M16 21.5V23.6" stroke="#42526E" stroke-width="0.7"/>
<path d="M14.4 23.6H17.6C17.3 24.5 16.7 24.9 16 24.9C15.3 24.9 14.7 24.5 14.4 23.6Z" fill="#344563"/>
</svg>
<svg style="position:absolute;left:1118px;top:713px;overflow:visible" width="32" height="32" viewBox="0 0 32 32"><circle cx="16" cy="16" r="16" fill="#00B8D9"/>
<path d="M7.6 6.9H24.4L24.9 14L24.1 23.3L19.8 26.3C18 26.9 14 26.9 12.2 26.3L7.9 23.3L7.1 14Z" fill="#FFAB00" stroke="#FFAB00" stroke-width="0.4" stroke-linejoin="round"/>
<path d="M9.9 6.9C7.6 6.3 5.5 7.4 5.5 9.7C5.5 11.2 6.4 12.4 7.7 12.8L9.5 12.3Z" fill="#FF8B00"/>
<path d="M22.1 6.9C24.4 6.3 26.5 7.4 26.5 9.7C26.5 11.2 25.6 12.4 24.3 12.8L22.5 12.3Z" fill="#FF8B00"/>
<path d="M13.3 7.3H19L18.1 11.9L21.4 15V23.3L20.3 24.1H11.7L10.6 23.3V15L13.9 11.9Z" fill="#FFFFFF"/>
<circle cx="11.9" cy="11.9" r="1.05" fill="#42526E"/>
<circle cx="20.2" cy="11.9" r="1.05" fill="#42526E"/>
<ellipse cx="16" cy="20.2" rx="2.75" ry="1.55" fill="#344563"/>
<path d="M16 21.5V23.6" stroke="#42526E" stroke-width="0.7"/>
<path d="M14.4 23.6H17.6C17.3 24.5 16.7 24.9 16 24.9C15.3 24.9 14.7 24.5 14.4 23.6Z" fill="#344563"/>
</svg>
<div style="position:absolute;left:1421px;top:721px;width:18px;height:16px;background:#0052CC;border-radius:8px;"></div>
<svg style="position:absolute;left:1506px;top:721px;overflow:visible" width="16" height="16" viewBox="0 0 16 16"><path d="M0.2 0.9H15.9V3.2H0.2Z M5 -0.2H10.8V1H5Z M1.3 3.8H14.8L13 16H2.7Z" fill="#42526E"/></svg>
<div style="position:absolute;left:1548px;top:720px;width:4px;height:4px;border-radius:2px;background:#42526E"></div>
<div style="position:absolute;left:1548px;top:727px;width:4px;height:4px;border-radius:2px;background:#42526E"></div>
<div style="position:absolute;left:1548px;top:734px;width:4px;height:4px;border-radius:2px;background:#42526E"></div>
<div style="position:absolute;left:117.4px;top:15.15px;font-size:14px;line-height:14px;font-weight:400;color:#DEEBFF;white-space:pre;letter-spacing:-0.250px;">Dashboards</div>
<div style="position:absolute;left:225px;top:15.15px;font-size:14px;line-height:14px;font-weight:400;color:#DEEBFF;white-space:pre;letter-spacing:-0.322px;">Projects</div>
<div style="position:absolute;left:307.7px;top:15.15px;font-size:14px;line-height:14px;font-weight:400;color:#DEEBFF;white-space:pre;letter-spacing:-0.35px;transform:scaleX(0.9415);transform-origin:0 0;">Issues</div>
<div style="position:absolute;left:378.4px;top:15.15px;font-size:14px;line-height:14px;font-weight:400;color:#DEEBFF;white-space:pre;letter-spacing:-0.460px;">Boards</div>
<div style="position:absolute;left:454.6px;top:15.15px;font-size:14px;line-height:14px;font-weight:400;color:#DEEBFF;white-space:pre;letter-spacing:-0.546px;">Plans</div>
<div style="position:absolute;left:521px;top:15.15px;font-size:14px;line-height:14px;font-weight:400;color:#DEEBFF;white-space:pre;letter-spacing:-0.669px;">Assets</div>
<div style="position:absolute;left:594px;top:15.15px;font-size:14px;line-height:14px;font-weight:400;color:#DEEBFF;white-space:pre;letter-spacing:-0.201px;">Templates</div>
<div style="position:absolute;left:700.8px;top:15.15px;font-size:14px;line-height:14px;font-weight:700;color:#FFFFFF;white-space:pre;letter-spacing:-0.432px;">Create</div>
<div style="position:absolute;left:1249.5px;top:16.05px;font-size:14px;line-height:14px;font-weight:400;color:#B3BAC5;white-space:pre;letter-spacing:-0.560px;">Search</div>
<div style="position:absolute;left:20.4px;top:66.03px;font-size:29.5px;line-height:29.5px;font-weight:400;color:#172B4D;white-space:pre;letter-spacing:-0.358px;-webkit-text-stroke:0.35px #172B4D;">Manage Templates</div>
<div style="position:absolute;left:20px;top:127.15px;font-size:14px;line-height:14px;font-weight:400;color:#0052CC;white-space:pre;letter-spacing:0.021px;">Templates</div>
<div style="position:absolute;left:104.3px;top:127.15px;font-size:14px;line-height:14px;font-weight:400;color:#42526E;white-space:pre;letter-spacing:-0.617px;">Scopes</div>
<div style="position:absolute;left:168.5px;top:127.15px;font-size:14px;line-height:14px;font-weight:400;color:#42526E;white-space:pre;letter-spacing:-0.301px;">Hierarchies</div>
<div style="position:absolute;left:256.7px;top:127.15px;font-size:14px;line-height:14px;font-weight:400;color:#42526E;white-space:pre;letter-spacing:-0.336px;">Variables</div>
<div style="position:absolute;left:331.5px;top:127.15px;font-size:14px;line-height:14px;font-weight:400;color:#42526E;white-space:pre;letter-spacing:-0.670px;">Tags</div>
<div style="position:absolute;left:378.4px;top:127.15px;font-size:14px;line-height:14px;font-weight:400;color:#42526E;white-space:pre;letter-spacing:-0.310px;">Checklists</div>
<div style="position:absolute;left:15px;top:171.35px;font-size:14px;line-height:14px;font-weight:400;color:#172B4D;white-space:pre;letter-spacing:-0.054px;">Template is an easy way to prepopulate field values when creating or editing a single issue.</div>
<div style="position:absolute;left:579.4px;top:171.35px;font-size:14px;line-height:14px;font-weight:400;color:#0052CC;white-space:pre;letter-spacing:-0.299px;">Learn more</div>
<div style="position:absolute;left:1372.5px;top:177.15px;font-size:14px;line-height:14px;font-weight:700;color:#FFFFFF;white-space:pre;letter-spacing:-0.360px;">Create Template</div>
<div style="position:absolute;left:25.2px;top:229.55px;font-size:14px;line-height:14px;font-weight:400;color:#6B778C;white-space:pre;">Enter name</div>
<div style="position:absolute;left:308.2px;top:229.55px;font-size:14px;line-height:14px;font-weight:400;color:#6B778C;white-space:pre;">Select tag</div>
<div style="position:absolute;left:592.2px;top:229.55px;font-size:14px;line-height:14px;font-weight:400;color:#6B778C;white-space:pre;">Select scope</div>
<div style="position:absolute;left:875.2px;top:229.55px;font-size:14px;line-height:14px;font-weight:400;color:#172B4D;white-space:pre;">ALL</div>
<div style="position:absolute;left:1158.2px;top:229.55px;font-size:14px;line-height:14px;font-weight:400;color:#6B778C;white-space:pre;">Select owner</div>
<div style="position:absolute;left:1440.3px;top:212.84px;font-size:12px;line-height:12px;font-weight:400;color:#6B778C;white-space:pre;letter-spacing:-0.094px;">Can apply</div>
<div style="position:absolute;left:1522px;top:229.15px;font-size:14px;line-height:14px;font-weight:400;color:#42526E;white-space:pre;letter-spacing:-0.516px;">Reset</div>
<div style="position:absolute;left:101.4px;top:288.84px;font-size:12px;line-height:12px;font-weight:400;color:#5E6C84;white-space:pre;letter-spacing:-0.104px;-webkit-text-stroke:0.3px #5E6C84;">Name</div>
<div style="position:absolute;left:411.6px;top:288.84px;font-size:12px;line-height:12px;font-weight:400;color:#5E6C84;white-space:pre;letter-spacing:-0.453px;-webkit-text-stroke:0.3px #5E6C84;">Tag</div>
<div style="position:absolute;left:566.5px;top:288.84px;font-size:12px;line-height:12px;font-weight:400;color:#5E6C84;white-space:pre;letter-spacing:-0.226px;-webkit-text-stroke:0.3px #5E6C84;">Scope</div>
<div style="position:absolute;left:722px;top:288.84px;font-size:12px;line-height:12px;font-weight:400;color:#5E6C84;white-space:pre;letter-spacing:0.057px;-webkit-text-stroke:0.3px #5E6C84;">Available</div>
<div style="position:absolute;left:799.6px;top:288.84px;font-size:12px;line-height:12px;font-weight:400;color:#5E6C84;white-space:pre;letter-spacing:-0.007px;-webkit-text-stroke:0.3px #5E6C84;">Owners</div>
<div style="position:absolute;left:986.1px;top:288.84px;font-size:12px;line-height:12px;font-weight:400;color:#5E6C84;white-space:pre;letter-spacing:-0.200px;-webkit-text-stroke:0.3px #5E6C84;">Created</div>
<div style="position:absolute;left:1110px;top:288.84px;font-size:12px;line-height:12px;font-weight:400;color:#5E6C84;white-space:pre;letter-spacing:0.088px;-webkit-text-stroke:0.3px #5E6C84;">Changed by</div>
<div style="position:absolute;left:1296.7px;top:288.84px;font-size:12px;line-height:12px;font-weight:400;color:#5E6C84;white-space:pre;letter-spacing:-0.131px;-webkit-text-stroke:0.3px #5E6C84;">Changed</div>
<div style="position:absolute;left:1421.3px;top:288.84px;font-size:12px;line-height:12px;font-weight:400;color:#5E6C84;white-space:pre;letter-spacing:-0.465px;-webkit-text-stroke:0.3px #5E6C84;">Usages</div>
<div style="position:absolute;left:722px;top:305.84px;font-size:12px;line-height:12px;font-weight:400;color:#5E6C84;white-space:pre;letter-spacing:0.661px;-webkit-text-stroke:0.3px #5E6C84;">for</div>
<div style="position:absolute;left:113.3px;top:339.15px;font-size:14px;line-height:14px;font-weight:400;color:#0052CC;white-space:pre;letter-spacing:0.061px;-webkit-text-stroke:0.35px #0052CC;">Template</div>
<div style="position:absolute;left:111.2px;top:376.69px;font-size:11px;line-height:11px;font-weight:400;color:#6B778C;white-space:pre;letter-spacing:0.069px;">Template for Export/Import</div>
<div style="position:absolute;left:419.59999999999997px;top:352.55px;font-size:14px;line-height:14px;font-weight:400;color:#172B4D;white-space:pre;letter-spacing:-0.302px;">Template</div>
<div style="position:absolute;left:491.59999999999997px;top:352.55px;font-size:14px;line-height:14px;font-weight:400;color:#172B4D;white-space:pre;letter-spacing:-0.561px;">Scope</div>
<div style="position:absolute;left:566.8px;top:353.15px;font-size:14px;line-height:14px;font-weight:400;color:#172B4D;white-space:pre;letter-spacing:-0.029px;">scope for all groups</div>
<div style="position:absolute;left:725.8px;top:355.69px;font-size:11px;line-height:11px;font-weight:700;color:#006644;white-space:pre;letter-spacing:-0.35px;transform:scaleX(0.9282);transform-origin:0 0;">SCOPE</div>
<div style="position:absolute;left:861.9px;top:353.15px;font-size:14px;line-height:14px;font-weight:400;color:#0052CC;white-space:pre;letter-spacing:0.192px;-webkit-text-stroke:0.35px #0052CC;">admin</div>
<div style="position:absolute;left:986px;top:353.15px;font-size:14px;line-height:14px;font-weight:400;color:#172B4D;white-space:pre;">6/30/2023</div>
<div style="position:absolute;left:1172.3px;top:353.15px;font-size:14px;line-height:14px;font-weight:400;color:#0052CC;white-space:pre;letter-spacing:0.192px;-webkit-text-stroke:0.35px #0052CC;">admin</div>
<div style="position:absolute;left:1296.6px;top:353.15px;font-size:14px;line-height:14px;font-weight:400;color:#172B4D;white-space:pre;">6/30/2023</div>
<div style="position:absolute;left:1426.6px;top:354.34px;font-size:12px;line-height:12px;font-weight:400;color:#FFFFFF;white-space:pre;-webkit-text-stroke:0.2px #FFFFFF;">0</div>
<div style="position:absolute;left:113.3px;top:425.15px;font-size:14px;line-height:14px;font-weight:400;color:#0052CC;white-space:pre;letter-spacing:-0.35px;transform:scaleX(0.9154);transform-origin:0 0;-webkit-text-stroke:0.35px #0052CC;">IT</div>
<div style="position:absolute;left:111.2px;top:462.69px;font-size:11px;line-height:11px;font-weight:400;color:#6B778C;white-space:pre;letter-spacing:-0.054px;">Test Export Import</div>
<div style="position:absolute;left:419.59999999999997px;top:424.55px;font-size:14px;line-height:14px;font-weight:400;color:#172B4D;white-space:pre;letter-spacing:-0.259px;">Lillian</div>
<div style="position:absolute;left:419.59999999999997px;top:452.55px;font-size:14px;line-height:14px;font-weight:400;color:#172B4D;white-space:pre;letter-spacing:-0.005px;">Test Export/Import</div>
<div style="position:absolute;left:566.8px;top:439.15px;font-size:14px;line-height:14px;font-weight:400;color:#172B4D;white-space:pre;letter-spacing:-0.029px;">scope for all groups</div>
<div style="position:absolute;left:725.8px;top:441.69px;font-size:11px;line-height:11px;font-weight:700;color:#006644;white-space:pre;letter-spacing:-0.35px;transform:scaleX(0.9282);transform-origin:0 0;">SCOPE</div>
<div style="position:absolute;left:861.9px;top:415.15px;font-size:14px;line-height:14px;font-weight:400;color:#0052CC;white-space:pre;letter-spacing:0.192px;-webkit-text-stroke:0.35px #0052CC;">admin</div>
<div style="position:absolute;left:862px;top:463.15px;font-size:14px;line-height:14px;font-weight:400;color:#0052CC;white-space:pre;letter-spacing:0.076px;-webkit-text-stroke:0.35px #0052CC;">Lillian Ashley</div>
<div style="position:absolute;left:986px;top:439.15px;font-size:14px;line-height:14px;font-weight:400;color:#172B4D;white-space:pre;">6/29/2023</div>
<div style="position:absolute;left:1172.3px;top:439.15px;font-size:14px;line-height:14px;font-weight:400;color:#0052CC;white-space:pre;letter-spacing:0.192px;-webkit-text-stroke:0.35px #0052CC;">admin</div>
<div style="position:absolute;left:1296.6px;top:439.15px;font-size:14px;line-height:14px;font-weight:400;color:#172B4D;white-space:pre;">6/29/2023</div>
<div style="position:absolute;left:1426.6px;top:440.34px;font-size:12px;line-height:12px;font-weight:400;color:#FFFFFF;white-space:pre;-webkit-text-stroke:0.2px #FFFFFF;">1</div>
<div style="position:absolute;left:113.3px;top:511.15px;font-size:14px;line-height:14px;font-weight:400;color:#0052CC;white-space:pre;letter-spacing:0.279px;-webkit-text-stroke:0.35px #0052CC;">IT Imported</div>
<div style="position:absolute;left:111.2px;top:548.69px;font-size:11px;line-height:11px;font-weight:400;color:#6B778C;white-space:pre;letter-spacing:-0.054px;">Test Export Import</div>
<div style="position:absolute;left:419.59999999999997px;top:524.55px;font-size:14px;line-height:14px;font-weight:400;color:#172B4D;white-space:pre;letter-spacing:-0.005px;">Test Export/Import</div>
<div style="position:absolute;left:566.8px;top:525.15px;font-size:14px;line-height:14px;font-weight:400;color:#172B4D;white-space:pre;">All projects</div>
<div style="position:absolute;left:725.8px;top:527.69px;font-size:11px;line-height:11px;font-weight:700;color:#006644;white-space:pre;letter-spacing:-0.35px;transform:scaleX(0.9282);transform-origin:0 0;">SCOPE</div>
<div style="position:absolute;left:861.9px;top:525.15px;font-size:14px;line-height:14px;font-weight:400;color:#0052CC;white-space:pre;letter-spacing:0.192px;-webkit-text-stroke:0.35px #0052CC;">admin</div>
<div style="position:absolute;left:986px;top:525.15px;font-size:14px;line-height:14px;font-weight:400;color:#172B4D;white-space:pre;">6/28/2023</div>
<div style="position:absolute;left:1172.3px;top:525.15px;font-size:14px;line-height:14px;font-weight:400;color:#0052CC;white-space:pre;letter-spacing:0.192px;-webkit-text-stroke:0.35px #0052CC;">admin</div>
<div style="position:absolute;left:1296.6px;top:525.15px;font-size:14px;line-height:14px;font-weight:400;color:#172B4D;white-space:pre;">6/29/2023</div>
<div style="position:absolute;left:1426.6px;top:526.34px;font-size:12px;line-height:12px;font-weight:400;color:#FFFFFF;white-space:pre;-webkit-text-stroke:0.2px #FFFFFF;">0</div>
<div style="position:absolute;left:113.3px;top:579.15px;font-size:14px;line-height:14px;font-weight:400;color:#0052CC;white-space:pre;letter-spacing:0.124px;-webkit-text-stroke:0.35px #0052CC;">CS+New Feature imported</div>
<div style="position:absolute;left:111.2px;top:616.69px;font-size:11px;line-height:11px;font-weight:400;color:#6B778C;white-space:pre;letter-spacing:-0.160px;">Ticket for the CS</div>
<div style="position:absolute;left:419.59999999999997px;top:592.55px;font-size:14px;line-height:14px;font-weight:400;color:#172B4D;white-space:pre;letter-spacing:-0.35px;transform:scaleX(0.8379);transform-origin:0 0;">CS</div>
<div style="position:absolute;left:566.8px;top:593.15px;font-size:14px;line-height:14px;font-weight:400;color:#172B4D;white-space:pre;letter-spacing:-0.029px;">scope for all groups</div>
<div style="position:absolute;left:725.8px;top:595.69px;font-size:11px;line-height:11px;font-weight:700;color:#006644;white-space:pre;letter-spacing:-0.35px;transform:scaleX(0.9282);transform-origin:0 0;">SCOPE</div>
<div style="position:absolute;left:861.9px;top:593.15px;font-size:14px;line-height:14px;font-weight:400;color:#0052CC;white-space:pre;letter-spacing:0.192px;-webkit-text-stroke:0.35px #0052CC;">admin</div>
<div style="position:absolute;left:986px;top:593.15px;font-size:14px;line-height:14px;font-weight:400;color:#172B4D;white-space:pre;">6/27/2023</div>
<div style="position:absolute;left:1172.3px;top:593.15px;font-size:14px;line-height:14px;font-weight:400;color:#0052CC;white-space:pre;letter-spacing:0.192px;-webkit-text-stroke:0.35px #0052CC;">admin</div>
<div style="position:absolute;left:1296.6px;top:593.15px;font-size:14px;line-height:14px;font-weight:400;color:#172B4D;white-space:pre;">6/27/2023</div>
<div style="position:absolute;left:1426.6px;top:594.34px;font-size:12px;line-height:12px;font-weight:400;color:#FFFFFF;white-space:pre;-webkit-text-stroke:0.2px #FFFFFF;">0</div>
<div style="position:absolute;left:113.3px;top:646.15px;font-size:14px;line-height:14px;font-weight:400;color:#0052CC;white-space:pre;letter-spacing:-0.35px;transform:scaleX(0.8842);transform-origin:0 0;-webkit-text-stroke:0.35px #0052CC;">CS</div>
<div style="position:absolute;left:111.2px;top:683.69px;font-size:11px;line-height:11px;font-weight:400;color:#6B778C;white-space:pre;letter-spacing:-0.160px;">Ticket for the CS</div>
<div style="position:absolute;left:419.59999999999997px;top:659.55px;font-size:14px;line-height:14px;font-weight:400;color:#172B4D;white-space:pre;letter-spacing:-0.35px;transform:scaleX(0.8379);transform-origin:0 0;">CS</div>
<div style="position:absolute;left:566.8px;top:660.15px;font-size:14px;line-height:14px;font-weight:400;color:#172B4D;white-space:pre;letter-spacing:-0.35px;transform:scaleX(0.9173);transform-origin:0 0;">GLOBAL</div>
<div style="position:absolute;left:725.8px;top:662.69px;font-size:11px;line-height:11px;font-weight:700;color:#006644;white-space:pre;letter-spacing:-0.35px;transform:scaleX(0.9282);transform-origin:0 0;">SCOPE</div>
<div style="position:absolute;left:861.9px;top:660.15px;font-size:14px;line-height:14px;font-weight:400;color:#0052CC;white-space:pre;letter-spacing:0.192px;-webkit-text-stroke:0.35px #0052CC;">admin</div>
<div style="position:absolute;left:986px;top:660.15px;font-size:14px;line-height:14px;font-weight:400;color:#172B4D;white-space:pre;">6/26/2023</div>
<div style="position:absolute;left:1172.3px;top:660.15px;font-size:14px;line-height:14px;font-weight:400;color:#0052CC;white-space:pre;letter-spacing:0.192px;-webkit-text-stroke:0.35px #0052CC;">admin</div>
<div style="position:absolute;left:1296.6px;top:660.15px;font-size:14px;line-height:14px;font-weight:400;color:#172B4D;white-space:pre;">6/26/2023</div>
<div style="position:absolute;left:1426.6px;top:661.34px;font-size:12px;line-height:12px;font-weight:400;color:#FFFFFF;white-space:pre;-webkit-text-stroke:0.2px #FFFFFF;">0</div>
<div style="position:absolute;left:113.3px;top:716.35px;font-size:14px;line-height:14px;font-weight:400;color:#0052CC;white-space:pre;letter-spacing:-0.063px;-webkit-text-stroke:0.35px #0052CC;">Version Picker</div>
<div style="position:absolute;left:419.59999999999997px;top:721.55px;font-size:14px;line-height:14px;font-weight:400;color:#172B4D;white-space:pre;letter-spacing:-0.35px;transform:scaleX(0.9173);transform-origin:0 0;">GLOBAL</div>
<div style="position:absolute;left:566.8px;top:722.15px;font-size:14px;line-height:14px;font-weight:400;color:#172B4D;white-space:pre;letter-spacing:-0.35px;transform:scaleX(0.9173);transform-origin:0 0;">GLOBAL</div>
<div style="position:absolute;left:725.5px;top:724.69px;font-size:11px;line-height:11px;font-weight:700;color:#42526E;white-space:pre;letter-spacing:-0.234px;">OWNER</div>
<div style="position:absolute;left:861.9px;top:722.15px;font-size:14px;line-height:14px;font-weight:400;color:#0052CC;white-space:pre;letter-spacing:0.192px;-webkit-text-stroke:0.35px #0052CC;">admin</div>
<div style="position:absolute;left:986px;top:722.15px;font-size:14px;line-height:14px;font-weight:400;color:#172B4D;white-space:pre;">6/26/2023</div>
<div style="position:absolute;left:1172.3px;top:722.15px;font-size:14px;line-height:14px;font-weight:400;color:#0052CC;white-space:pre;letter-spacing:0.192px;-webkit-text-stroke:0.35px #0052CC;">admin</div>
<div style="position:absolute;left:1296.6px;top:722.15px;font-size:14px;line-height:14px;font-weight:400;color:#172B4D;white-space:pre;">6/26/2023</div>
<div style="position:absolute;left:1426.6px;top:723.34px;font-size:12px;line-height:12px;font-weight:400;color:#FFFFFF;white-space:pre;-webkit-text-stroke:0.2px #FFFFFF;">0</div>
</body></html>
